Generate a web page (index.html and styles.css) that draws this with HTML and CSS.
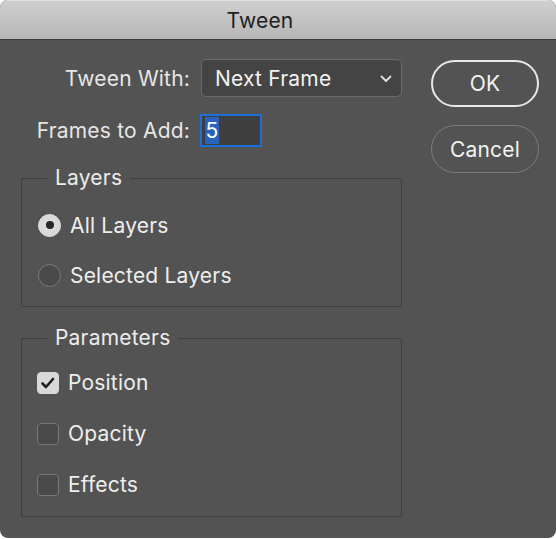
FILE: index.html
```html
<!DOCTYPE html>
<html>
<head>
<meta charset="utf-8">
<link rel="stylesheet" href="styles.css">
</head>
<body>
<div class="window">
  <div class="titlebar">Tween</div>
  <div class="content">
    <div class="left">
      <div class="form-grid">
        <label class="lbl">Tween With:</label>
        <div class="select">
          <span>Next Frame</span>
          <svg class="chev" width="12" height="8" viewBox="0 0 12 8"><polyline points="1.5,1.5 6,6 10.5,1.5" fill="none" stroke="#e0e0e0" stroke-width="1.8" stroke-linecap="round" stroke-linejoin="round"/></svg>
        </div>
        <label class="lbl">Frames to Add:</label>
        <div class="numbox"><span class="sel">5</span></div>
      </div>
      <fieldset class="group layers">
        <legend>Layers</legend>
        <div class="row"><span class="radio on"><span class="dot"></span></span><span class="txt">All Layers</span></div>
        <div class="row"><span class="radio"></span><span class="txt">Selected Layers</span></div>
      </fieldset>
      <fieldset class="group params">
        <legend>Parameters</legend>
        <div class="row crow"><span class="check on"><svg width="22" height="22" viewBox="0 0 22 22"><polyline points="5.5,11.5 9,15 16,7" fill="none" stroke="#1e1e1e" stroke-width="2.6" stroke-linecap="round" stroke-linejoin="round"/></svg></span><span class="txt">Position</span></div>
        <div class="row crow"><span class="check"></span><span class="txt">Opacity</span></div>
        <div class="row crow"><span class="check"></span><span class="txt">Effects</span></div>
      </fieldset>
    </div>
    <div class="buttons">
      <div class="btn ok">OK</div>
      <div class="btn cancel">Cancel</div>
    </div>
  </div>
</div>
</body>
</html>
```
FILE: styles.css
```css
* { box-sizing: border-box; }
html, body { margin: 0; padding: 0; background: #ffffff; }
body { font-family: Inter, "Open Sans", sans-serif; letter-spacing: 0.2px; }
.window {
  width: 556px;
  height: 538px;
  border-radius: 8px;
  overflow: hidden;
  background: #535353;
}
.titlebar {
  height: 40px;
  background: linear-gradient(#cfcfcf, #b6b6b6);
  border-top: 1px solid #e0e0e0;
  border-bottom: 1px solid #3a3a3a;
  color: #1f1f1f;
  font-size: 21px;
  text-align: center;
  line-height: 40px;
  padding-right: 36px;
}
.content {
  display: flex;
  padding: 19px 0 0 21px;
}
.left { width: 381px; }
.form-grid {
  display: grid;
  grid-template-columns: 169px auto;
  column-gap: 11px;
  row-gap: 17px;
  align-items: center;
}
.lbl {
  color: #e6e6e6;
  font-size: 21px;
  text-align: right;
}
.select {
  height: 38px;
  width: 201px;
  background: #444444;
  border: 1px solid #6a6a6a;
  border-radius: 5px;
  display: flex;
  align-items: center;
  justify-content: space-between;
  padding: 0 9px 0 13px;
  color: #f2f2f2;
  font-size: 21px;
}
.chev { margin-top: 2px; }
.numbox {
  width: 62px;
  height: 33px;
  margin-left: -1px;
  border: 2px solid #1d6fd9;
  background: #3e3e3e;
  padding: 1px 3px;
  display: flex;
}
.sel {
  background: #2862bd;
  color: #ffffff;
  font-size: 21px;
  line-height: 27px;
  width: 14px;
  text-align: center;
}
.group {
  margin: 19px 0 0 0;
  padding: 0;
  border: 1px solid #3e3e3e;
  border-radius: 2px;
}
.group legend {
  color: #ececec;
  font-size: 21px;
  line-height: 24px;
  padding: 0 8px;
  margin-left: 25px;
}
.layers { padding: 10px 0 6px 0; }
.params { padding: 7px 0 6px 0; }
.row {
  height: 50px;
  display: flex;
  align-items: center;
  padding-left: 16px;
}
.crow { height: 51px; padding-left: 15px; }
.txt {
  color: #eeeeee;
  font-size: 21px;
}
.radio {
  width: 23px;
  height: 23px;
  border-radius: 50%;
  border: 1.5px solid #7a7a7a;
  background: #4a4a4a;
  margin-right: 9px;
  display: flex;
  align-items: center;
  justify-content: center;
}
.radio.on { background: #dadada; border-color: #dadada; }
.dot {
  width: 8px;
  height: 8px;
  border-radius: 50%;
  background: #262626;
}
.check {
  width: 22px;
  height: 22px;
  border-radius: 4px;
  border: 1.5px solid #777777;
  background: #4a4a4a;
  margin-right: 9px;
  display: flex;
  align-items: center;
  justify-content: center;
}
.check.on { background: #d9d9d9; border-color: #d9d9d9; }
.check svg { flex: none; }
.buttons {
  margin-left: 29px;
  width: 108px;
  display: flex;
  flex-direction: column;
  gap: 18px;
  padding-top: 1px;
}
.btn {
  height: 47px;
  border-radius: 24px;
  display: flex;
  align-items: center;
  justify-content: center;
  color: #f2f2f2;
  font-size: 21px;
}
.ok { border: 2px solid #e8e8e8; }
.cancel { height: 48px; border: 1.5px solid #7c7c7c; }
```
